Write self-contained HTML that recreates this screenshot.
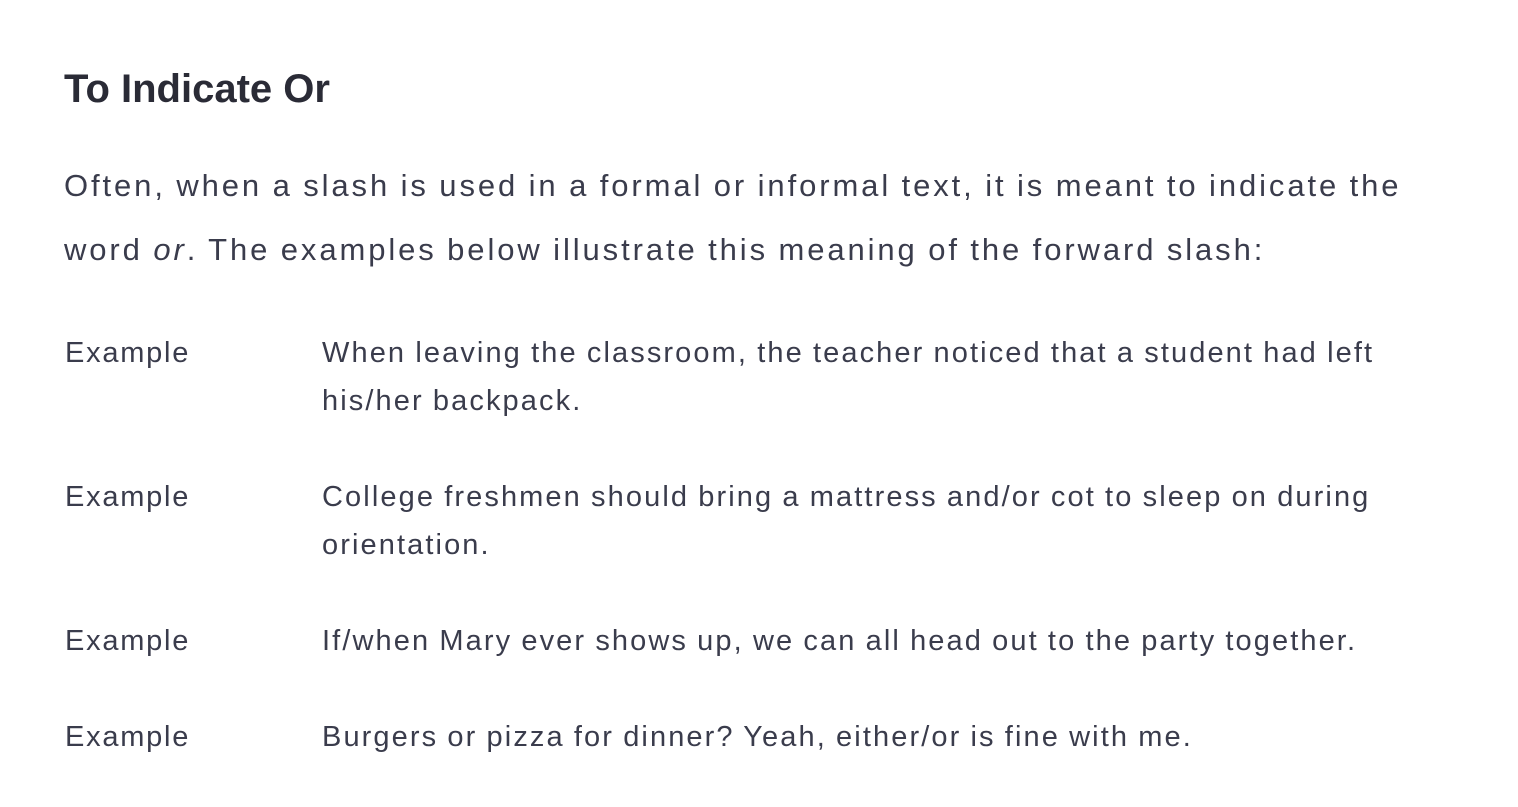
<!DOCTYPE html>
<html><head><meta charset="utf-8"><style>
body{margin:0;background:#fff;width:1518px;height:807px;overflow:hidden;font-family:"Liberation Sans",sans-serif;color:#3a3c4c}
.a{position:absolute;white-space:nowrap}
h2{position:absolute;left:64px;top:64px;margin:0;font-size:40px;line-height:50px;font-weight:bold;color:#2a2b36;letter-spacing:0}
.p{left:64px;font-size:31px;line-height:64px;letter-spacing:2.9px;word-spacing:-1px}
.l{left:65px;font-size:29px;line-height:48px;letter-spacing:1.75px}
.r{left:322px;font-size:29px;line-height:48px;letter-spacing:2.1px;word-spacing:-1px}
</style></head><body>
<h2>To Indicate Or</h2>
<div class="a p" style="top:154px">Often, when a slash is used in a formal or informal text, it is meant to indicate the<br>word <i>or</i>. The examples below illustrate this meaning of the forward slash:</div>
<div class="a l" style="top:329px">Example</div>
<div class="a r" style="top:329px">When leaving the classroom, the teacher noticed that a student had left<br>his/her backpack.</div>
<div class="a l" style="top:473px">Example</div>
<div class="a r" style="top:473px">College freshmen should bring a mattress and/or cot to sleep on during<br>orientation.</div>
<div class="a l" style="top:617px">Example</div>
<div class="a r" style="top:617px">If/when Mary ever shows up, we can all head out to the party together.</div>
<div class="a l" style="top:713px">Example</div>
<div class="a r" style="top:713px">Burgers or pizza for dinner? Yeah, either/or is fine with me.</div>
</body></html>
